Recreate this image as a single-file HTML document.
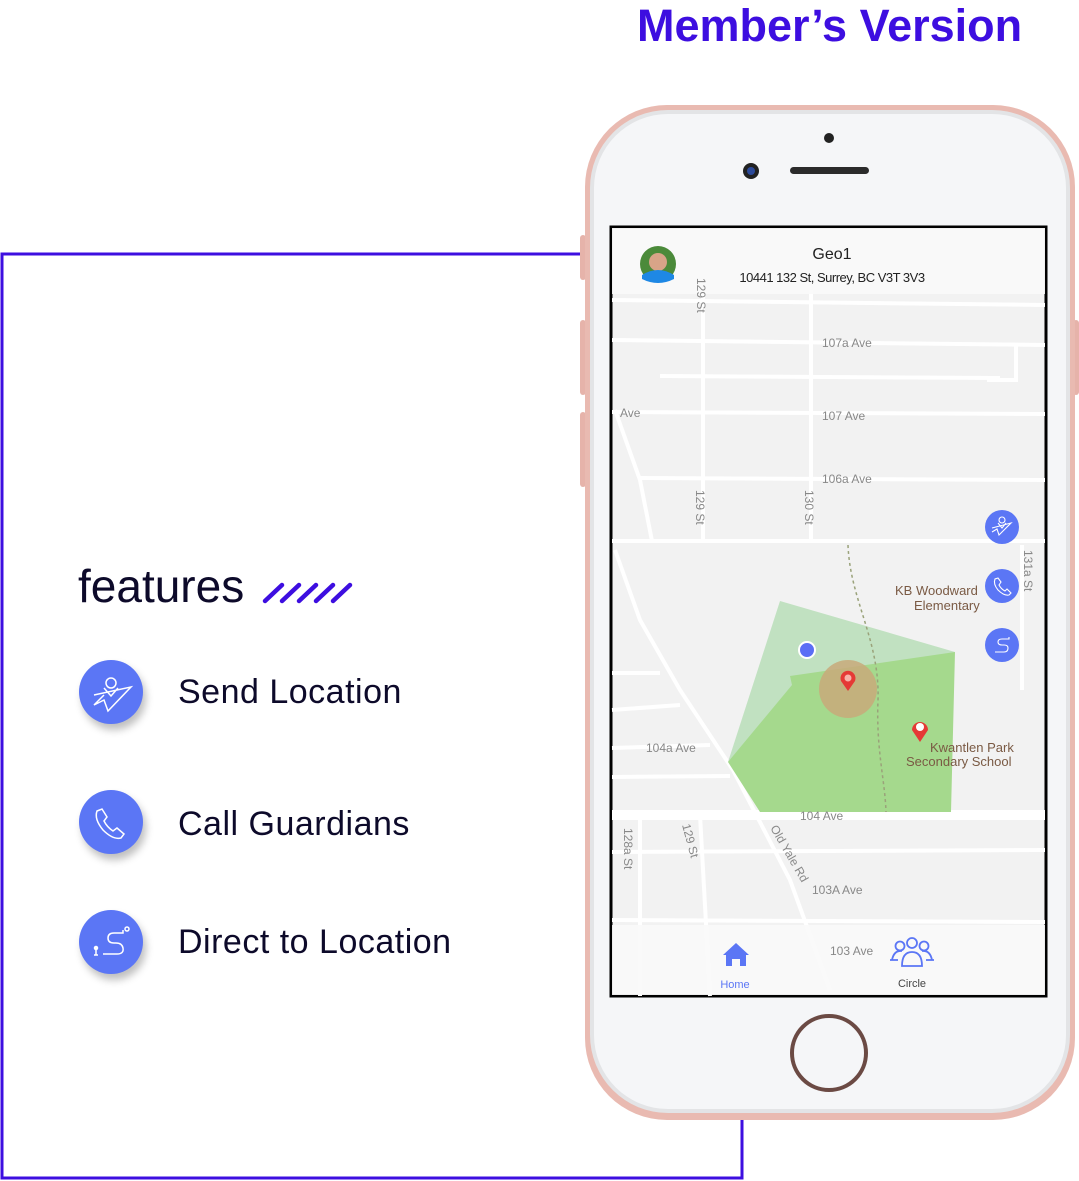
<!DOCTYPE html>
<html><head><meta charset="utf-8"><style>
body{margin:0;width:1079px;height:1181px;background:#fff;position:relative;overflow:hidden;font-family:"Liberation Sans",sans-serif}
.a{position:absolute;white-space:nowrap}
.t{font-family:"Liberation Sans",sans-serif;color:#0d0a2a}
.ic{position:absolute;width:64px;height:64px;border-radius:50%;background:#5b76f5;box-shadow:3px 6px 8px rgba(0,0,0,.25)}
</style></head><body>
<div class="a" style="left:637px;top:0px;font-size:45px;line-height:52px;font-weight:bold;color:#3d0ee0;font-family:'Liberation Sans',sans-serif">Member’s Version</div>
<svg class="a" style="left:0;top:0" width="1079" height="1181">
<polyline points="580,254 2,254 2,1178 742,1178 742,1118" fill="none" stroke="#3d0ee0" stroke-width="3"/>
<g stroke="#3d0ee0" stroke-width="4.5" stroke-linecap="round"><line x1="265" y1="601" x2="282" y2="585"/><line x1="282" y1="601" x2="299" y2="585"/><line x1="299" y1="601" x2="316" y2="585"/><line x1="316" y1="601" x2="333" y2="585"/><line x1="333" y1="601" x2="350" y2="585"/></g>
<rect x="580" y="235" width="6" height="45" rx="3" fill="#e6b3aa"/>
<rect x="580" y="320" width="6" height="75" rx="3" fill="#e6b3aa"/>
<rect x="580" y="412" width="6" height="75" rx="3" fill="#e6b3aa"/>
<rect x="1073" y="320" width="6" height="75" rx="3" fill="#e6b3aa"/>
<rect x="585" y="105" width="490" height="1015" rx="82" fill="#e9bab1"/>
<rect x="590" y="110" width="480" height="1003" rx="78" fill="#e3e4e6"/>
<rect x="594" y="114" width="472" height="995" rx="74" fill="#f5f6f8"/>
<circle cx="829" cy="138" r="5" fill="#222"/>
<circle cx="751" cy="171" r="8" fill="#222"/><circle cx="751" cy="171" r="4" fill="#2c4a9a"/>
<rect x="790" y="167" width="79" height="7" rx="3.5" fill="#2b2b2b"/>
<circle cx="829" cy="1053" r="37" fill="none" stroke="#6b4a44" stroke-width="4"/>
<rect x="611" y="227" width="435" height="769" fill="#f2f2f2" stroke="#000" stroke-width="3"/>
<g stroke="#fff" stroke-width="4" fill="none">
<line x1="612" y1="300" x2="1045" y2="305"/><line x1="612" y1="340" x2="1045" y2="345"/>
<line x1="660" y1="376" x2="1000" y2="378"/><polyline points="1016,345 1016,380 987,380"/>
<line x1="612" y1="412" x2="1045" y2="414"/><line x1="640" y1="478" x2="1045" y2="480"/>
<line x1="612" y1="541" x2="1045" y2="541"/>
<line x1="703" y1="290" x2="703" y2="541"/><line x1="811" y1="290" x2="811" y2="541"/>
<polyline points="615,410 640,480 652,541"/>
<polyline points="615,550 640,620 680,690 733,770 790,880 830,990"/>
<line x1="612" y1="673" x2="660" y2="673"/><line x1="612" y1="710" x2="680" y2="705"/>
<line x1="612" y1="748" x2="710" y2="745"/><line x1="612" y1="777" x2="730" y2="776"/>
<line x1="612" y1="815" x2="1045" y2="815" stroke-width="10"/>
<line x1="612" y1="852" x2="1045" y2="850"/><line x1="612" y1="920" x2="1045" y2="922"/>
<line x1="640" y1="815" x2="640" y2="996"/><line x1="700" y1="815" x2="710" y2="996"/>
<line x1="1022" y1="545" x2="1022" y2="690"/>
</g>
<rect x="612" y="228" width="433" height="66" fill="#fafafa" opacity=".92"/>
<rect x="612" y="925" width="433" height="70" fill="#fafafa" opacity=".9"/>
<polygon points="780,601 955,652 728,762" fill="#c1e1c1"/>
<polygon points="790,676 955,652 951,812 760,812 728,762 792,685" fill="#a5d98d"/>
<path d="M848,545 C850,600 880,640 878,700 C876,750 885,780 886,812" stroke="#9aa27a" stroke-width="1.5" stroke-dasharray="3,3" fill="none"/>
<circle cx="848" cy="689" r="29" fill="#c8a97a" opacity=".85"/>
<path d="M848,691 l-7,-10 a7.5,7.5 0 1 1 14,0 z" fill="#e53935"/><circle cx="848" cy="678" r="3.5" fill="#f7b2a8"/>
<path d="M920,742 l-8,-12 a8,8 0 1 1 16,0 z" fill="#e53935"/><circle cx="920" cy="727" r="4" fill="#fff"/>
<circle cx="807" cy="650" r="8" fill="#5b6ef5" stroke="#fff" stroke-width="2"/>
<g fill="#888" font-size="12" font-family="Liberation Sans">
<text x="822" y="347">107a Ave</text><text x="822" y="420">107 Ave</text><text x="822" y="483">106a Ave</text>
<text x="620" y="417">Ave</text><text x="646" y="752">104a Ave</text><text x="800" y="820">104 Ave</text><text x="812" y="894">103A Ave</text><text x="830" y="955">103 Ave</text>
<text transform="translate(696,490) rotate(90)">129 St</text><text transform="translate(805,490) rotate(90)">130 St</text>
<text transform="translate(697,278) rotate(90)">129 St</text><text transform="translate(1024,550) rotate(90)">131a St</text>
<text transform="translate(624,828) rotate(90)">128a St</text><text transform="translate(682,825) rotate(75)">129 St</text><text transform="translate(770,828) rotate(60)">Old Yale Rd</text>
</g>
<g fill="#7a5a44" font-size="13" font-family="Liberation Sans"><text x="895" y="595">KB Woodward</text><text x="914" y="610">Elementary</text><text x="930" y="752">Kwantlen Park</text><text x="906" y="766">Secondary School</text></g>
<g fill="#5b76f5"><circle cx="1002" cy="527" r="17"/><circle cx="1002" cy="586" r="17"/><circle cx="1002" cy="645" r="17"/></g>
<g fill="none" stroke="#fff" stroke-width="1.1">
<circle cx="1002" cy="520" r="3"/><path d="M998,523 l4,5 l4,-5 M992,528 l19,-5 l-12,12 l-2,-6 l-5,3"/>
<path d="M995,579 q-2,5 3,11 q6,6 11,5 l2,-2 l-4,-4 l-2,2 q-4,-2 -6,-6 l2,-3 l-3,-4z"/>
<path d="M995,652 h9 q4,0 4,-4 q0,-3 -4,-3 h-2 q-4,0 -4,-3 q0,-3 4,-3 h7 v-2"/>
</g>
<circle cx="658" cy="264" r="18" fill="#4b8a3a"/><circle cx="658" cy="262" r="9" fill="#d8a488"/><path d="M642,275 q16,-10 32,0 v4 q-16,8 -32,0z" fill="#1e88e5"/>
<text x="832" y="259" text-anchor="middle" font-size="16" fill="#222" font-family="Liberation Sans">Geo1</text>
<text x="832" y="282" text-anchor="middle" font-size="13" fill="#222" font-family="Liberation Sans" letter-spacing="-.5">10441 132 St, Surrey, BC V3T 3V3</text>
<path d="M723,955 l13,-12 l13,12 h-3 v11 h-6 v-7 h-8 v7 h-6 v-11z" fill="#5b76f5"/>
<text x="735" y="988" text-anchor="middle" font-size="11" fill="#5b76f5">Home</text>
<g fill="none" stroke="#5b76f5" stroke-width="1.8"><circle cx="900" cy="946" r="4.5"/><circle cx="912" cy="943" r="5"/><circle cx="924" cy="946" r="4.5"/><path d="M892,960 q2,-10 10,-9 M932,960 q-2,-10 -10,-9 M902,966 q0,-14 10,-14 q10,0 10,14z M890,960h8 M926,960h8"/></g>
<text x="912" y="987" text-anchor="middle" font-size="11" fill="#444">Circle</text>
</svg>
<div class="a t" style="left:78px;top:559px;font-size:46px">features</div>
<div class="ic" style="left:79px;top:660px"></div>
<div class="ic" style="left:79px;top:790px"></div>
<div class="ic" style="left:79px;top:910px"></div>
<svg class="a" style="left:0;top:0" width="200" height="1000" fill="none" stroke="#fff" stroke-width="1.5">
<circle cx="111" cy="683" r="5"/><path d="M104,688 l7,8 l7,-8 M94,695 l37,-8 l-23,24 l-4,-11 l-10,5 l10,-10"/>
<path d="M97,811 q-3,8 6,19 q10,10 18,8 l3,-4 l-7,-6 l-4,3 q-6,-4 -9,-10 l3,-4 l-5,-8z"/>
<path d="M103,954 h14 q7,0 6,-6 q-1,-5 -7,-5 h-2 q-6,0 -6,-5 q0,-5 6,-5 h9 v-3" /><circle cx="127" cy="929" r="2"/><circle cx="96" cy="948" r="1.5" fill="#fff"/><path d="M96,950 v5 M94,955 h4"/>
</svg>
<div class="a t" style="left:178px;top:673px;font-size:34px;letter-spacing:0.5px">Send Location</div>
<div class="a t" style="left:178px;top:805px;font-size:34px;letter-spacing:0.5px">Call Guardians</div>
<div class="a t" style="left:178px;top:923px;font-size:34px;letter-spacing:0.5px">Direct to Location</div>
</body></html>
